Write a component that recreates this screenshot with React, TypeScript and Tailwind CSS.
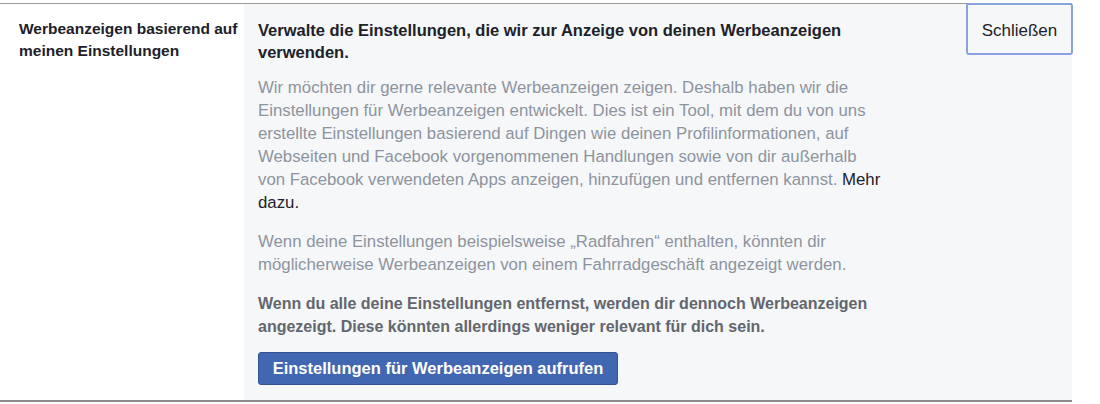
import React from 'react';

const App: React.FC = () => {
  return (
    <div className="w-[1100px] h-[404px] bg-white pt-[3px] font-['Liberation_Sans',Arial,sans-serif]">
      <div className="relative w-[1072px] border-t border-b-2 border-t-[#9a9a9a] border-b-[#8c8c8c] flex h-[399px]">
        <div className="w-[244px] shrink-0 pl-[19px] pt-[14px]">
          <div className="text-[15.5px] leading-[22px] font-bold text-[#1d2129]">
            Werbeanzeigen basierend auf meinen Einstellungen
          </div>
        </div>
        <div className="flex-1 bg-[#f6f7f9] pl-[14px] pt-[15px]">
          <div className="w-[626px]">
            <h3 className="text-[16.5px] leading-[22px] font-bold text-[#1d2129]">
              Verwalte die Einstellungen, die wir zur Anzeige von deinen Werbeanzeigen verwenden.
            </h3>
            <p className="mt-[13px] text-[16.8px] leading-[23px] text-[#8d949e]">
              Wir möchten dir gerne relevante Werbeanzeigen zeigen. Deshalb haben wir die Einstellungen für Werbeanzeigen entwickelt. Dies ist ein Tool, mit dem du von uns erstellte Einstellungen basierend auf Dingen wie deinen Profilinformationen, auf Webseiten und Facebook vorgenommenen Handlungen sowie von dir außerhalb von Facebook verwendeten Apps anzeigen, hinzufügen und entfernen kannst.{' '}
              <a className="text-[#1d2129]">Mehr dazu.</a>
            </p>
            <p className="mt-[16px] text-[16.8px] leading-[23px] text-[#8d949e]">
              Wenn deine Einstellungen beispielsweise „Radfahren“ enthalten, könnten dir möglicherweise Werbeanzeigen von einem Fahrradgeschäft angezeigt werden.
            </p>
            <p className="mt-[16px] text-[16px] leading-[23px] font-bold text-[#62666d]">
              Wenn du alle deine Einstellungen entfernst, werden dir dennoch Werbeanzeigen angezeigt. Diese könnten allerdings weniger relevant für dich sein.
            </p>
            <button className="mt-[14px] h-[33px] w-[360px] rounded-[3px] bg-[#4267b2] border border-[#34528f] text-white text-[16.5px] font-bold">
              Einstellungen für Werbeanzeigen aufrufen
            </button>
          </div>
        </div>
        <button className="absolute right-[-1px] top-[-1px] w-[107px] h-[52px] pt-[3px] rounded-[3px] border-2 border-[#8aa2df] bg-[#f6f7f9] text-[17px] text-[#1d2129]">
          Schließen
        </button>
      </div>
    </div>
  );
};

export default App;
